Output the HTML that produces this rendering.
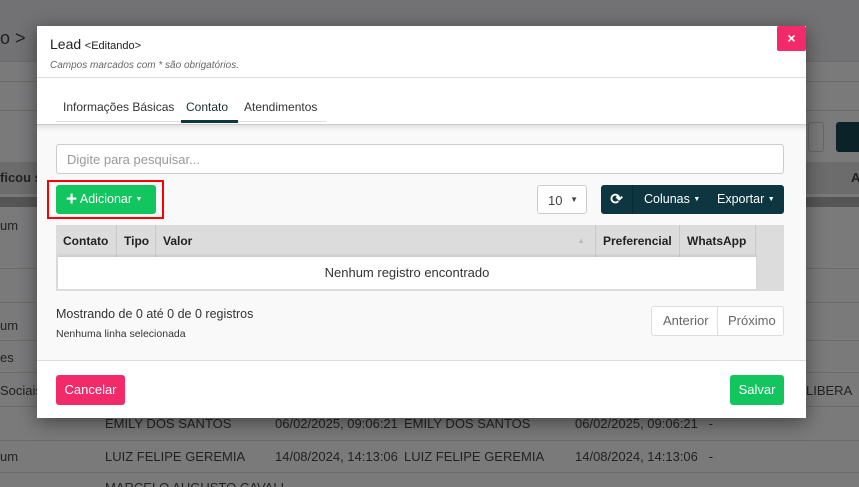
<!DOCTYPE html>
<html><head><meta charset="utf-8"><style>
*{box-sizing:border-box;margin:0;padding:0}
html,body{width:859px;height:487px;overflow:hidden}
body{background:#7a7a7b;font-family:"Liberation Sans",sans-serif;position:relative;color:#333}
.bg{position:absolute;font-size:13px;color:#222;white-space:nowrap}
.line{position:absolute;left:0;right:0;height:1px;background:#6c6c6c}
.modal{position:absolute;left:37px;top:26px;width:769px;height:392px;background:#fff;box-shadow:0 4px 18px rgba(0,0,0,.45)}
.hdr{height:52px;border-bottom:1px solid #dcdcdc;padding:10px 13px}
.t1{font-size:13px;color:#222}
.t1 b{font-weight:normal;font-size:14px}
.t1 span{font-size:11px}
.t2{font-size:10px;font-style:italic;color:#666;margin-top:8px}
.close{position:absolute;right:0;top:0;width:29px;height:25px;background:#f22a69;color:#fff;text-align:center;line-height:25px;font-size:14px;font-weight:bold;border-radius:2px}
.tabs{position:absolute;top:53px;left:19px;height:45px;font-size:12px;color:#333}
.tabs div{position:absolute;top:21px;white-space:nowrap}
.body{position:absolute;top:98px;left:0;width:769px;height:236px;background:#f9f9f9;border-top:1px solid #ccc;box-shadow:inset 0 6px 6px -4px rgba(0,0,0,.12)}
.search{position:absolute;left:19px;top:19px;width:728px;height:30px;border:1px solid #ccc;border-radius:3px;background:#fff;font-size:13px;color:#999;padding:7px 10px}
.add{position:absolute;left:19px;top:60px;width:100px;height:29px;background:#12c55e;border-radius:3px;color:#fff;font-size:12.5px;line-height:29px;padding-left:10px;white-space:nowrap}
.redbox{position:absolute;left:10px;top:55px;width:117px;height:39px;border:2px solid #f00}
.sel{position:absolute;left:500px;top:60px;width:50px;height:29px;border:1px solid #ccc;border-radius:3px;background:#fff;font-size:13px;color:#444;padding:7px 10px}
.grp{position:absolute;left:564px;top:60px;width:183px;height:29px;background:#0e3640;border-radius:3px;color:#fff;font-size:12.5px;line-height:29px}
.grp div{position:absolute;top:0;white-space:nowrap}
.tbl{position:absolute;left:19px;top:100px;width:728px;height:66px;background:#dcdcdc}
.th{position:absolute;top:0;height:32px;font-size:12px;font-weight:bold;color:#222;line-height:32px;padding-left:7px;border-right:1px solid #c8c8c8;white-space:nowrap}
.tr{position:absolute;left:2px;top:32px;width:698px;height:32px;background:#fff;font-size:13px;text-align:center;line-height:32px;color:#333;box-shadow:0 -2px 2px rgba(0,0,0,.08)}
.info{position:absolute;left:19px;font-size:12px;color:#333}
.pg{position:absolute;left:614px;top:181px;width:133px;height:30px;border:1px solid #ddd;border-radius:3px;background:#fff;font-size:13px;color:#666;line-height:28px}
.pg span{position:absolute;top:0}
.foot{position:absolute;top:334px;left:0;width:769px;height:58px;border-top:1px solid #ddd}
.btn{position:absolute;top:14px;height:30px;border-radius:3px;color:#fff;font-size:13px;line-height:30px;text-align:center}
</style></head><body>
<div style="position:absolute;left:0;top:0;width:859px;height:62px;background:#727275"></div>
<div class="bg" style="left:0;top:28px;font-size:18px;color:#222">o &gt;</div>
<div class="line" style="top:61px"></div><div class="line" style="top:81px"></div><div class="line" style="top:110px"></div>
<div class="bg" style="left:808px;top:122px;width:16px;height:30px;border:1px solid #666;border-radius:3px"></div>
<div class="bg" style="left:836px;top:122px;width:30px;height:30px;background:#0a2228;border-radius:3px"></div>
<div style="position:absolute;left:0;top:162px;width:859px;height:32px;background:#6c6c6c"></div>
<div class="bg" style="left:0;top:170px;font-weight:bold">ficou s</div>
<div class="bg" style="left:851px;top:170px;font-weight:bold">A</div>
<div style="position:absolute;left:0;top:197px;width:859px;height:10px;background:#555"></div>
<div class="line" style="top:268px"></div><div class="line" style="top:302px"></div><div class="line" style="top:340px"></div><div class="line" style="top:372px"></div><div class="line" style="top:406px"></div><div class="line" style="top:440px"></div><div class="line" style="top:472px"></div>
<div class="bg" style="left:0;top:218px">um</div>
<div class="bg" style="left:0;top:318px">um</div>
<div class="bg" style="left:0;top:350px">es</div>
<div class="bg" style="left:0;top:383px">Sociais</div>
<div class="bg" style="left:806px;top:383px">LIBERA</div>
<div class="bg" style="left:105px;top:416px">EMILY DOS SANTOS</div><div class="bg" style="left:275px;top:416px">06/02/2025, 09:06:21</div><div class="bg" style="left:404px;top:416px">EMILY DOS SANTOS</div><div class="bg" style="left:575px;top:416px">06/02/2025, 09:06:21 &nbsp; -</div>
<div class="bg" style="left:0;top:449px">um</div>
<div class="bg" style="left:105px;top:449px">LUIZ FELIPE GEREMIA</div><div class="bg" style="left:275px;top:449px">14/08/2024, 14:13:06</div><div class="bg" style="left:404px;top:449px">LUIZ FELIPE GEREMIA</div><div class="bg" style="left:575px;top:449px">14/08/2024, 14:13:06 &nbsp; -</div>
<div class="bg" style="left:105px;top:480px">MARCELO AUGUSTO CAVALI</div>

<div class="modal">
<div class="hdr"><div class="t1"><b>Lead</b> <span>&lt;Editando&gt;</span></div><div class="t2">Campos marcados com * são obrigatórios.</div></div>
<div class="close">×</div>
<div class="tabs">
<div style="left:7px">Informações Básicas</div>
<div style="left:130px;color:#1a2e33">Contato</div>
<div style="left:188px">Atendimentos</div>
<div style="position:absolute;left:0;top:42px;width:270px;height:1px;background:#ddd"></div>
<div style="position:absolute;left:125px;top:41px;width:57px;height:3px;background:#0e3640"></div>
</div>
<div class="body">
<div class="search">Digite para pesquisar...</div>
<div class="redbox"></div>
<div class="add"><span style="font-size:19px;font-weight:bold;vertical-align:-2px">+</span> Adicionar <span style="font-size:7px;vertical-align:2px">▼</span></div>
<div class="sel">10<span style="position:absolute;right:8px;top:9px;font-size:8px">▼</span></div>
<div class="grp">
<div style="left:0;width:32px;text-align:center;border-right:1px solid #0a2a32;font-size:15px;font-weight:bold">⟳</div>
<div style="left:43px">Colunas <span style="font-size:7px;vertical-align:2px">▼</span></div>
<div style="left:116px">Exportar <span style="font-size:7px;vertical-align:2px">▼</span></div>
</div>
<div class="tbl">
<div class="th" style="left:0;width:61px">Contato</div>
<div class="th" style="left:61px;width:39px">Tipo</div>
<div class="th" style="left:100px;width:440px">Valor<span style="position:absolute;right:10px;color:#bbb;font-size:8px">▲</span></div>
<div class="th" style="left:540px;width:84px">Preferencial</div>
<div class="th" style="left:624px;width:76px">WhatsApp</div>
<div class="tr">Nenhum registro encontrado</div>
</div>
<div class="info" style="top:182px;font-size:12.5px">Mostrando de 0 até 0 de 0 registros</div>
<div class="info" style="top:203px;font-size:10.5px">Nenhuma linha selecionada</div>
<div class="pg"><span style="left:11px">Anterior</span><span style="left:65px;top:0;height:28px;width:1px;background:#ddd"></span><span style="left:76px">Próximo</span></div>
</div>
<div class="foot">
<div class="btn" style="left:19px;width:69px;background:#f22a69">Cancelar</div>
<div class="btn" style="left:693px;width:54px;background:#12c55e">Salvar</div>
</div>
</div>
</body></html>
